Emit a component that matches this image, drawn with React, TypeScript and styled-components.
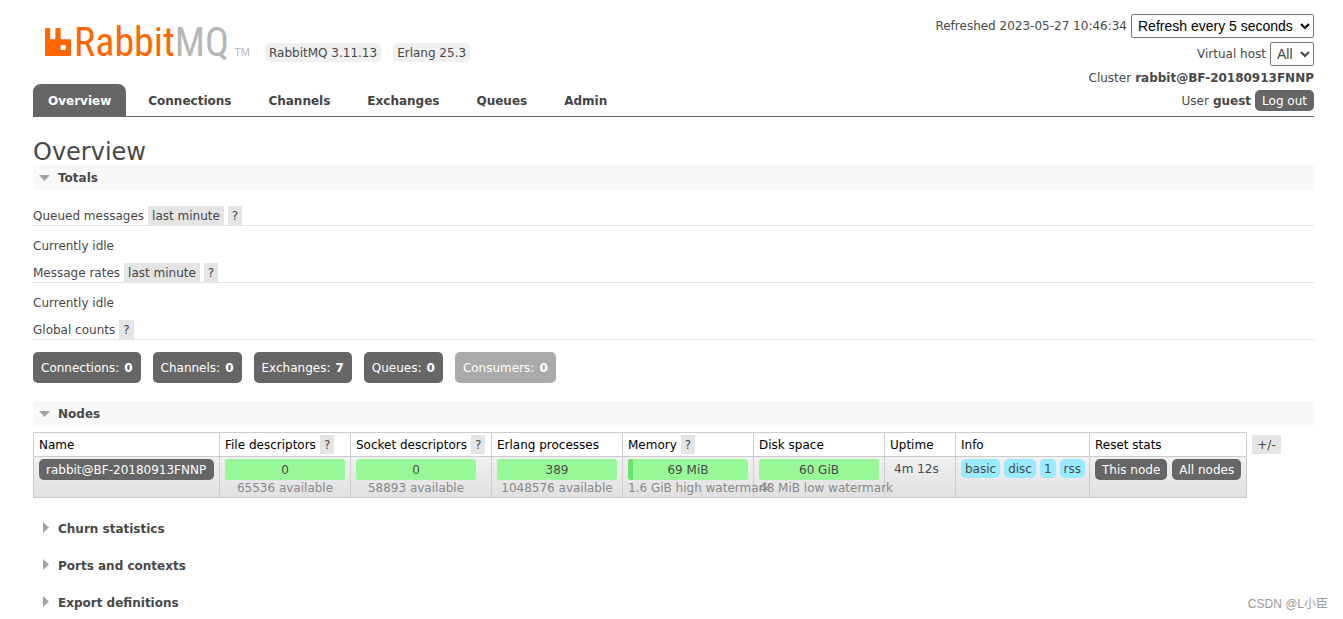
import React, { useState } from "react";
import styled, { createGlobalStyle } from "styled-components";

const GlobalStyle = createGlobalStyle`
  * { box-sizing: border-box; }
  body {
    margin: 0;
    background: #fff;
    color: #484848;
    font: 12px/18px Verdana, "DejaVu Sans", sans-serif;
  }
  h1, h2, p, ul { margin: 0; padding: 0; }
  ul { list-style: none; }
`;

const Page = styled.div`
  padding: 14px 29px 0 33px;
`;

const Header = styled.header`
  display: flex;
  justify-content: space-between;
  border-bottom: 1px solid #666;
`;

const Brand = styled.div`
  display: flex;
  flex-direction: column;
  justify-content: space-between;
`;

const LogoRow = styled.div`
  display: flex;
  align-items: flex-end;
  gap: 12px;
  padding-left: 11px;
`;

const LogoLink = styled.a`
  display: flex;
  align-items: baseline;
  width: 209px;
  height: 48px;
  padding-top: 7px;
  color: #f60;
  text-decoration: none;
  font: 40px/44px "Roboto Condensed", "Arial Narrow", sans-serif;
  svg { flex: none; margin-right: 2px; }
`;

const LogoGrey = styled.span`
  color: #b6b6b6;
`;

const LogoMark = styled.span`
  color: #b6b6b6;
  margin-left: 5px;
  font: 11px/20px "Liberation Sans", Arial, sans-serif;
`;

const Version = styled.span`
  padding: 1px 4px 0;
  border-radius: 5px;
  background: #f0f0f0;
`;

const Tabs = styled.ul`
  display: flex;
  gap: 7px;
`;

const Tab = styled.a<{ $active?: boolean }>`
  display: block;
  padding: 8px 15px 6px;
  border-radius: 8px 8px 0 0;
  font-weight: bold;
  text-decoration: none;
  color: ${(p) => (p.$active ? "#fff" : "#444")};
  background: ${(p) => (p.$active ? "#666" : "transparent")};
`;

const Status = styled.div`
  display: flex;
  flex-direction: column;
  align-items: flex-end;
  padding-bottom: 5px;
`;

const StatusRow = styled.div<{ $gap?: boolean }>`
  display: flex;
  align-items: center;
  gap: 4px;
  min-height: 21px;
  margin-bottom: ${(p) => (p.$gap ? "4px" : "0")};
`;

const ClusterRow = styled(StatusRow)`
  min-height: 24px;
`;

const Select = styled.select<{ $muted?: boolean }>`
  height: 24px;
  padding: 0 4px 0 2px;
  border: 1px solid #767676;
  border-radius: 2px;
  background-color: #fff;
  color: ${(p) => (p.$muted ? "#484848" : "#000")};
  font: 14px "Liberation Sans", Arial, sans-serif;
`;

const Button = styled.button`
  height: 21px;
  padding: 1px 7px 0;
  border: 0;
  border-radius: 5px;
  background: #666;
  color: #fff;
  font: 12px/20px Verdana, "DejaVu Sans", sans-serif;
  white-space: nowrap;
`;

const NodeLink = styled.a`
  display: block;
  padding: 1px 7px 0;
  border-radius: 5px;
  background: #666;
  color: #fff;
  line-height: 20px;
  text-decoration: none;
`;

const Title = styled.h1`
  padding-top: 22px;
  font-size: 24px;
  font-weight: normal;
  line-height: 26px;
`;

const SectionHead = styled.h2<{ $open?: boolean }>`
  display: flex;
  font-size: 12px;
  background: ${(p) => (p.$open ? "#f8f8f8" : "transparent")};
  margin-bottom: ${(p) => (p.$open ? "0" : "12px")};
`;

const Toggle = styled.button`
  display: flex;
  align-items: center;
  flex: 1;
  height: 25px;
  padding: 0 5px;
  border: 0;
  background: none;
  color: inherit;
  font: bold 12px/18px Verdana, "DejaVu Sans", sans-serif;
`;

const ToggleIcon = styled.svg`
  width: 13px;
  height: 13px;
  margin-right: 7px;
  fill: #a3a3a3;
`;

const TotalsBody = styled.div`
  padding: 16px 0 18px;
`;

const StatHead = styled.div`
  display: flex;
  align-items: flex-end;
  gap: 4px;
  height: 20px;
  border-bottom: 1px solid #e4e4e4;
`;

const Chip = styled.button`
  height: 19px;
  padding: 1px 4px 0;
  border: 0;
  background: #e4e4e4;
  color: #444;
  font: 12px/18px Verdana, "DejaVu Sans", sans-serif;
`;

const Idle = styled.p`
  padding: 11px 0 8px;
`;

const Counters = styled.ul`
  display: flex;
  gap: 12px;
  padding-top: 12px;
`;

const Counter = styled.a<{ $disabled?: boolean }>`
  display: flex;
  gap: 5px;
  padding: 7px 8px 6px;
  border-radius: 5px;
  background: ${(p) => (p.$disabled ? "#aaa" : "#666")};
  color: #fff;
  text-decoration: none;
`;

const NodesBody = styled.div`
  display: flex;
  align-items: flex-start;
  gap: 5px;
  padding: 6px 0 18px;
`;

const ColumnsChip = styled(Chip)`
  min-width: 29px;
  margin-top: 3px;
`;

const Table = styled.table`
  width: 1214px;
  table-layout: fixed;
  border-collapse: collapse;
  th, td {
    padding: 2px 5px;
    border: 1px solid #ccc;
    text-align: left;
    vertical-align: top;
    white-space: nowrap;
  }
  th { color: #000; font-weight: normal; height: 24px; }
  td { height: 41px; padding: 2px 5px 0; }
  tbody tr { background: linear-gradient(#f0f0f0, #e0e0e0); }
`;

const HeadCell = styled.div`
  display: flex;
  align-items: flex-end;
  gap: 4px;
  height: 19px;
`;

const Meter = styled.div`
  width: 120px;
`;

const Bar = styled.div<{ $used: number }>`
  height: 21px;
  padding-top: 1px;
  border-radius: 3px;
  background: linear-gradient(to right, #6be16b ${(p) => p.$used}%, #98f898 ${(p) => p.$used}%);
  line-height: 20px;
  text-align: center;
`;

const MeterNote = styled.div`
  display: flex;
  justify-content: safe center;
  color: #888;
  line-height: 16px;
`;

const Uptime = styled.div`
  padding: 1px 4px 0;
`;

const Tags = styled.div<{ $gap: number }>`
  display: flex;
  gap: ${(p) => p.$gap}px;
`;

const Tag = styled.span`
  padding: 1px 4px 0;
  border-radius: 5px;
  background: #99ebff;
`;

const Watermark = styled.div`
  position: absolute;
  right: 15px;
  top: 595px;
  color: #999;
  font: 12px/19px "Liberation Sans", "Noto Sans CJK SC", sans-serif;
`;

const tabs = ["Overview", "Connections", "Channels", "Exchanges", "Queues", "Admin"];

const counters: [string, number][] = [
  ["Connections", 0],
  ["Channels", 0],
  ["Exchanges", 7],
  ["Queues", 0],
  ["Consumers", 0],
];

const columns: { label: string; width: number; help?: boolean }[] = [
  { label: "Name", width: 186 },
  { label: "File descriptors", width: 131, help: true },
  { label: "Socket descriptors", width: 141, help: true },
  { label: "Erlang processes", width: 131 },
  { label: "Memory", width: 131, help: true },
  { label: "Disk space", width: 131 },
  { label: "Uptime", width: 71 },
  { label: "Info", width: 134 },
  { label: "Reset stats", width: 157 },
];

const meters = [
  { value: "0", note: "65536 available", used: 0 },
  { value: "0", note: "58893 available", used: 0 },
  { value: "389", note: "1048576 available", used: 0 },
  { value: "69 MiB", note: "1.6 GiB high watermark", used: 4 },
  { value: "60 GiB", note: "48 MiB low watermark", used: 0 },
];

function Section({ title, initial = false, children }: { title: string; initial?: boolean; children?: React.ReactNode }) {
  const [open, setOpen] = useState(initial);
  return (
    <section>
      <SectionHead $open={open}>
        <Toggle aria-expanded={open} onClick={() => setOpen(!open)}>
          <ToggleIcon viewBox="0 0 13 13" aria-hidden="true">
            <path d={open ? "M1 4h11L6.500 10z" : "M5 0v11l6-5.500z"} />
          </ToggleIcon>
          {title}
        </Toggle>
      </SectionHead>
      {open && children}
    </section>
  );
}

function Logo() {
  return (
    <LogoLink href="#">
      <svg width="28" height="28" viewBox="0 0 28 28" aria-hidden="true">
        <path
          fill="#f60"
          fillRule="evenodd"
          d="M2 0h3.200a1 1 0 0 1 1 1v9.200a1 1 0 0 0 1 1h3.200a1 1 0 0 0 1-1V1a1 1 0 0 1 1-1h3.200a1 1 0 0 1 1 1v9.200a1 1 0 0 0 1 1H26a1 1 0 0 1 1 1V27a1 1 0 0 1-1 1H2a1 1 0 0 1-1-1V1a1 1 0 0 1 1-1zM17.600 17a1 1 0 0 0-1 1v3a1 1 0 0 0 1 1h3.200a1 1 0 0 0 1-1v-3a1 1 0 0 0-1-1z"
        />
      </svg>
      <span>Rabbit</span>
      <LogoGrey>MQ</LogoGrey>
      <LogoMark>TM</LogoMark>
    </LogoLink>
  );
}

export default function App() {
  return (
    <>
      <GlobalStyle />
      <Page>
        <Header>
          <Brand>
            <LogoRow>
              <Logo />
              <Version>RabbitMQ 3.11.13</Version>
              <Version>Erlang 25.3</Version>
            </LogoRow>
            <nav>
              <Tabs>
                {tabs.map((t, i) => (
                  <li key={t}>
                    <Tab href="#" $active={i === 0}>{t}</Tab>
                  </li>
                ))}
              </Tabs>
            </nav>
          </Brand>
          <Status>
            <StatusRow $gap>
              <label htmlFor="refresh">Refreshed 2023-05-27 10:46:34</label>
              <Select id="refresh">
                <option>Refresh every 5 seconds</option>
              </Select>
            </StatusRow>
            <StatusRow>
              <label htmlFor="vhost">Virtual host</label>
              <Select id="vhost" $muted>
                <option>All</option>
              </Select>
            </StatusRow>
            <ClusterRow>
              Cluster <b>rabbit@BF-20180913FNNP</b>
            </ClusterRow>
            <StatusRow>
              User <b>guest</b>
              <Button>Log out</Button>
            </StatusRow>
          </Status>
        </Header>

        <main>
          <Title>Overview</Title>
          <Section title="Totals" initial>
            <TotalsBody>
              <StatHead>
                Queued messages <Chip>last minute</Chip>
                <Chip>?</Chip>
              </StatHead>
              <Idle>Currently idle</Idle>
              <StatHead>
                Message rates <Chip>last minute</Chip>
                <Chip>?</Chip>
              </StatHead>
              <Idle>Currently idle</Idle>
              <StatHead>
                Global counts <Chip>?</Chip>
              </StatHead>
              <Counters>
                {counters.map(([name, n]) => (
                  <li key={name}>
                    <Counter href="#" $disabled={name === "Consumers"}>
                      {name}: <b>{n}</b>
                    </Counter>
                  </li>
                ))}
              </Counters>
            </TotalsBody>
          </Section>

          <Section title="Nodes" initial>
            <NodesBody>
              <Table>
                <colgroup>
                  {columns.map((c) => (
                    <col key={c.label} width={c.width} />
                  ))}
                </colgroup>
                <thead>
                  <tr>
                    {columns.map((c) => (
                      <th key={c.label} scope="col">
                        <HeadCell>
                          {c.label}
                          {c.help && <Chip>?</Chip>}
                        </HeadCell>
                      </th>
                    ))}
                  </tr>
                </thead>
                <tbody>
                  <tr>
                    <td><NodeLink href="#">rabbit@BF-20180913FNNP</NodeLink></td>
                    {meters.map((m) => (
                      <td key={m.note}>
                        <Meter>
                          <Bar $used={m.used}>{m.value}</Bar>
                          <MeterNote>{m.note}</MeterNote>
                        </Meter>
                      </td>
                    ))}
                    <td><Uptime>4m 12s</Uptime></td>
                    <td>
                      <Tags $gap={4}>
                        {["basic", "disc", "1", "rss"].map((t) => (
                          <Tag key={t}>{t}</Tag>
                        ))}
                      </Tags>
                    </td>
                    <td>
                      <Tags $gap={5}>
                        <Button>This node</Button>
                        <Button>All nodes</Button>
                      </Tags>
                    </td>
                  </tr>
                </tbody>
              </Table>
              <ColumnsChip>+/-</ColumnsChip>
            </NodesBody>
          </Section>

          <Section title="Churn statistics" />
          <Section title="Ports and contexts" />
          <Section title="Export definitions" />
        </main>
      </Page>
      <Watermark>CSDN @L小臣</Watermark>
    </>
  );
}
